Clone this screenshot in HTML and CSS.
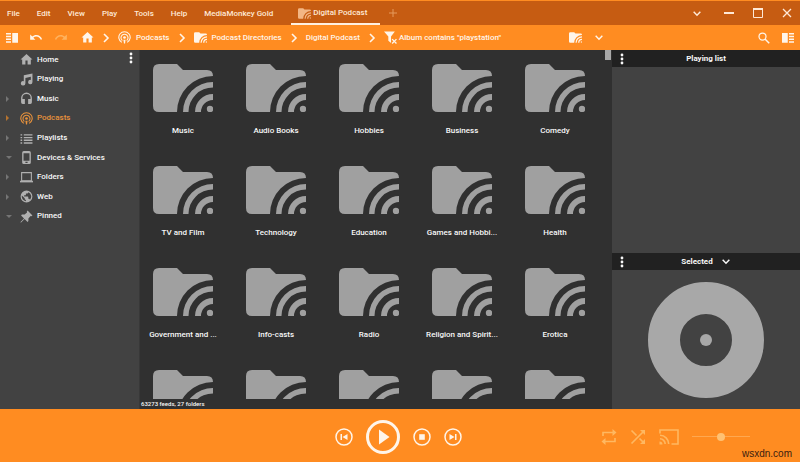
FILE: index.html
```html
<!DOCTYPE html>
<html lang="en">
<head>
    <meta charset="UTF-8">
    <meta name="viewport" content="width=device-width, initial-scale=1.0">
    <title>MediaMonkey</title>
    <link rel="stylesheet" href="styles.css">
</head>
<body>

    <!-- Shared icons -->
    <svg class="hidden" xmlns="http://www.w3.org/2000/svg">
        <symbol id="feedFolder" viewBox="0 0 60 48">
            <path d="M6 0H24L30 6H54Q60 6 60 12A36 36 0 0 0 24 48H6Q0 48 0 42V6Q0 0 6 0Z"/>
            <path d="M60 18V23.500A24.500 24.500 0 0 0 35.500 48H30A30 30 0 0 1 60 18Z"/>
            <path d="M60 30V36A12 12 0 0 0 48 48H42A18 18 0 0 1 60 30Z"/>
            <circle cx="57" cy="45" r="3.200"/>
        </symbol>
        <symbol id="home" viewBox="0 0 24 24"><path d="M10 21v-7h4v7h6v-9h3L12 2 1 12h3v9z"/></symbol>
        <symbol id="podcast" viewBox="0 0 24 24">
            <g fill="none" stroke="currentColor" stroke-width="2">
                <path d="M7 21A10.500 10.500 0 1 1 17 21"/>
                <path d="M8 17.500A6.500 6.500 0 1 1 16 17.500"/>
            </g>
            <circle cx="12" cy="12" r="2.500"/>
            <path d="M10 16h4l-1 7h-2z"/>
        </symbol>
        <symbol id="right" viewBox="0 0 8 12"><path d="M2 2l4 4-4 4" fill="none" stroke="currentColor" stroke-width="1.600"/></symbol>
        <symbol id="down" viewBox="0 0 12 8"><path d="M2 2l4 4 4-4" fill="none" stroke="currentColor" stroke-width="1.800"/></symbol>
        <symbol id="dots" viewBox="0 0 4 12"><circle cx="2" cy="2" r="1.400"/><circle cx="2" cy="6" r="1.400"/><circle cx="2" cy="10" r="1.400"/></symbol>
        <symbol id="panel" viewBox="0 0 24 20"><path d="M0 0h10v3H0zM0 5.500h10v3H0zM0 11h10v3H0zM0 16.500h10v3H0zM12.500 0H24v19.500H12.500z"/></symbol>
        <symbol id="undo" viewBox="0 0 24 12"><path d="M12.500 1C9.800 1 7.400 2 5.600 3.600L2 0v9h9L7.400 5.400C8.800 4.200 10.500 3.500 12.500 3.500c3.500 0 6.500 2.300 7.600 5.500l2.400-.8C21.100 4 17.200 1 12.500 1z"/></symbol>
    </svg>

    <!-- Title bar -->
    <header class="title-bar">
        <nav class="menu">
            <button>File</button>
            <button>Edit</button>
            <button>View</button>
            <button>Play</button>
            <button>Tools</button>
            <button>Help</button>
            <button>MediaMonkey Gold</button>
        </nav>
        <button class="tab"><svg class="icon-folder"><use href="#feedFolder"/></svg>Digital Podcast</button>
        <button class="add-tab" aria-label="New tab"><svg class="icon-small" viewBox="0 0 10 10"><path d="M5 1v8M1 5h8" stroke="currentColor"/></svg></button>
        <div class="window-buttons">
            <button class="tab-list" aria-label="Tabs"><svg class="icon-down"><use href="#down"/></svg></button>
            <button aria-label="Minimize"><svg class="icon-small" viewBox="0 0 10 10"><path d="M0 5h10" stroke="currentColor" stroke-width="2"/></svg></button>
            <button aria-label="Maximize"><svg class="icon-small" viewBox="0 0 10 10"><path d="M.5 1h9v8.500h-9z" fill="none" stroke="currentColor"/><path d="M0 1h10" stroke="currentColor" stroke-width="2"/></svg></button>
            <button aria-label="Close"><svg class="icon-small" viewBox="0 0 10 10"><path d="M1 1l8 8M9 1L1 9" stroke="currentColor" stroke-width="1.300"/></svg></button>
        </div>
    </header>

    <!-- Toolbar -->
    <div class="toolbar">
        <div class="toolbar-left">
            <button aria-label="Toggle sidebar"><svg class="icon-panel"><use href="#panel"/></svg></button>
            <button aria-label="Undo"><svg class="icon-undo"><use href="#undo"/></svg></button>
            <button class="redo" aria-label="Redo"><svg class="icon-undo flip"><use href="#undo"/></svg></button>
            <nav class="path">
                <a href="#" aria-label="Home"><svg class="icon"><use href="#home"/></svg></a>
                <svg class="icon-right"><use href="#right"/></svg>
                <a href="#"><svg class="icon"><use href="#podcast"/></svg>Podcasts</a>
                <svg class="icon-right"><use href="#right"/></svg>
                <a href="#"><svg class="icon-folder"><use href="#feedFolder"/></svg>Podcast Directories</a>
                <svg class="icon-right"><use href="#right"/></svg>
                <a href="#">Digital Podcast</a>
                <svg class="icon-right"><use href="#right"/></svg>
                <a href="#" class="filter"><svg class="icon" viewBox="0 0 24 24"><path d="M0 1h20l-7 9v12l-5-4v-8z"/><path d="M15 15l8 8M23 15l-8 8" stroke="currentColor" stroke-width="2.500"/></svg>Album contains "playstation"</a>
            </nav>
            <button class="view-button" aria-label="View"><svg class="icon-folder"><use href="#feedFolder"/></svg><svg class="icon-down"><use href="#down"/></svg></button>
        </div>
        <div class="toolbar-right">
            <button aria-label="Search"><svg class="icon-search" viewBox="0 0 24 24"><circle cx="9" cy="9" r="7" fill="none" stroke="currentColor" stroke-width="2.500"/><path d="M14 14l8.500 8.500" stroke="currentColor" stroke-width="3"/></svg></button>
            <button aria-label="Toggle playing list"><svg class="icon-panel flip"><use href="#panel"/></svg></button>
        </div>
    </div>

    <div class="content">

        <!-- Media tree -->
        <aside class="sidebar">
            <ul class="tree">
                <li><a href="#"><span class="arrow"></span><svg class="icon"><use href="#home"/></svg>Home</a></li>
                <li><a href="#"><span class="arrow"></span><svg class="icon" viewBox="0 0 24 24"><path d="M23 1v15.500a4 4 0 1 1-3-3.800V7L10 9v10a4.200 4.200 0 1 1-3-4V4z"/></svg>Playing</a></li>
                <li><a href="#"><span class="arrow closed"></span><svg class="icon" viewBox="0 0 24 24"><path d="M12 1A10 10 0 0 0 2 11v8a3 3 0 0 0 3 3h4v-9H4.500v-2a7.500 7.500 0 0 1 15 0v2H15v9h4a3 3 0 0 0 3-3v-8A10 10 0 0 0 12 1z"/></svg>Music</a></li>
                <li><a href="#" class="active"><span class="arrow closed"></span><svg class="icon"><use href="#podcast"/></svg>Podcasts</a></li>
                <li><a href="#"><span class="arrow closed"></span><svg class="icon" viewBox="0 0 24 24"><path d="M1 4h3v2.500H1zM7 4h16v2.500H7zM1 9h3v2.500H1zM7 9h16v2.500H7zM1 14h3v2.500H1zM7 14h16v2.500H7zM1 19h3v2.500H1zM7 19h16v2.500H7z"/></svg>Playlists</a></li>
                <li><a href="#"><span class="arrow open"></span><svg class="icon" viewBox="0 0 24 24"><path d="M7 0h10a3 3 0 0 1 3 3v18a3 3 0 0 1-3 3H7a3 3 0 0 1-3-3V3a3 3 0 0 1 3-3zM6.500 4v14h11V4zM10 20v2h4v-2z" fill-rule="evenodd"/></svg>Devices &amp; Services</a></li>
                <li><a href="#"><span class="arrow closed"></span><svg class="icon" viewBox="0 0 24 24"><path d="M3 3h18v15H3z" fill="none" stroke="currentColor" stroke-width="2"/><path d="M0 18h24v3H0z"/></svg>Folders</a></li>
                <li><a href="#"><span class="arrow closed"></span><svg class="icon" viewBox="1 1 22 22"><path d="M12 2a10 10 0 1 0 0 20 10 10 0 0 0 0-20zm-1 17.900A8 8 0 0 1 4.200 10.200L9 15v1c0 1.100.9 2 2 2zm6.900-2.500A2 2 0 0 0 16 16h-1v-3c0-.600-.400-1-1-1H8v-2h2c.600 0 1-.400 1-1V7h2a2 2 0 0 0 2-2v-.400a8 8 0 0 1 2.900 12.800z"/></svg>Web</a></li>
                <li><a href="#"><span class="arrow open"></span><svg class="icon" viewBox="0 0 24 24"><path d="M14 1l9 9-2 1.500-1.500-.5-4 4.500v5L14 22l-5.500-5.500L2 23H1v-1l6.500-6.500L2 10l1.500-1.500h5L13 4.500 12.500 3z"/></svg>Pinned</a></li>
            </ul>
            <button class="more" aria-label="Options"><svg class="icon-dots"><use href="#dots"/></svg></button>
        </aside>

        <!-- Directory -->
        <main class="main">
            <div class="folders">
                <div class="folder"><svg><use href="#feedFolder"/></svg><p>Music</p></div>
                <div class="folder"><svg><use href="#feedFolder"/></svg><p>Audio Books</p></div>
                <div class="folder"><svg><use href="#feedFolder"/></svg><p>Hobbies</p></div>
                <div class="folder"><svg><use href="#feedFolder"/></svg><p>Business</p></div>
                <div class="folder"><svg><use href="#feedFolder"/></svg><p>Comedy</p></div>
                <div class="folder"><svg><use href="#feedFolder"/></svg><p>TV and Film</p></div>
                <div class="folder"><svg><use href="#feedFolder"/></svg><p>Technology</p></div>
                <div class="folder"><svg><use href="#feedFolder"/></svg><p>Education</p></div>
                <div class="folder"><svg><use href="#feedFolder"/></svg><p>Games and Hobbi...</p></div>
                <div class="folder"><svg><use href="#feedFolder"/></svg><p>Health</p></div>
                <div class="folder"><svg><use href="#feedFolder"/></svg><p>Government and ...</p></div>
                <div class="folder"><svg><use href="#feedFolder"/></svg><p>Info-casts</p></div>
                <div class="folder"><svg><use href="#feedFolder"/></svg><p>Radio</p></div>
                <div class="folder"><svg><use href="#feedFolder"/></svg><p>Religion and Spirit...</p></div>
                <div class="folder"><svg><use href="#feedFolder"/></svg><p>Erotica</p></div>
                <div class="folder"><svg><use href="#feedFolder"/></svg></div>
                <div class="folder"><svg><use href="#feedFolder"/></svg></div>
                <div class="folder"><svg><use href="#feedFolder"/></svg></div>
                <div class="folder"><svg><use href="#feedFolder"/></svg></div>
                <div class="folder"><svg><use href="#feedFolder"/></svg></div>
            </div>
            <div class="scroll-thumb"></div>
            <div class="status">63273 feeds, 27 folders</div>
        </main>

        <!-- Right column -->
        <aside class="right-column">
            <div class="panel-header">
                <button aria-label="Playing list options"><svg class="icon-dots"><use href="#dots"/></svg></button>
                <h2>Playing list</h2>
            </div>
            <div class="playing-list"></div>
            <div class="panel-header">
                <button aria-label="Selected options"><svg class="icon-dots"><use href="#dots"/></svg></button>
                <h2>Selected <svg class="icon-down"><use href="#down"/></svg></h2>
            </div>
            <div class="artwork">
                <svg viewBox="0 0 116 116"><circle cx="58" cy="58" r="42" fill="none" stroke="currentColor" stroke-width="32"/><circle cx="58" cy="58" r="6"/></svg>
            </div>
        </aside>
    </div>

    <!-- Player -->
    <footer class="player">
        <div class="controls">
            <button aria-label="Previous"><svg class="control" viewBox="0 0 18 18"><circle cx="9" cy="9" r="8" fill="none" stroke="currentColor" stroke-width="1.500"/><path d="M5.500 6H7v6H5.500zM12.500 6v6L7.500 9z"/></svg></button>
            <button aria-label="Play"><svg class="control-play" viewBox="0 0 34 34"><circle cx="17" cy="17" r="15.500" fill="none" stroke="currentColor" stroke-width="3"/><path d="M13 9.500v15L23.500 17z"/></svg></button>
            <button aria-label="Stop"><svg class="control" viewBox="0 0 18 18"><circle cx="9" cy="9" r="8" fill="none" stroke="currentColor" stroke-width="1.500"/><path d="M6.200 6.200h5.600v5.600H6.200z"/></svg></button>
            <button aria-label="Next"><svg class="control" viewBox="0 0 18 18"><circle cx="9" cy="9" r="8" fill="none" stroke="currentColor" stroke-width="1.500"/><path d="M11 6h1.500v6H11zM5.500 6v6l5-3z"/></svg></button>
        </div>
        <div class="options">
            <button aria-label="Repeat"><svg class="option" viewBox="0 0 16 16"><path d="M2 7V3.500h10M14 9v3.500H4" fill="none" stroke="currentColor" stroke-width="1.600"/><path d="M11.500 0v7L15.500 3.500zM4.500 9v7L.5 12.500z"/></svg></button>
            <button aria-label="Shuffle"><svg class="option" viewBox="0 0 16 16"><path d="M1.500 1.500l5 5M1.500 14.500L13 3M9.500 9.500L13 13" fill="none" stroke="currentColor" stroke-width="1.700"/><path d="M10 1h5v5zM15 10v5h-5z"/></svg></button>
            <button aria-label="Cast"><svg class="cast" viewBox="0 0 20 16"><g fill="none" stroke="currentColor" stroke-width="1.600"><path d="M1 4.500V1h18v14h-6.500M1 6.300A8.700 8.700 0 0 1 9.700 15M1 9.800A5.200 5.200 0 0 1 6.200 15"/></g><path d="M.5 12.500A3 3 0 0 1 3.500 15.500h-3z"/></svg></button>
            <input type="range" class="volume" min="0" max="100" value="50" aria-label="Volume">
        </div>
        <span class="site">wsxdn.com</span>
    </footer>

</body>
</html>
```
FILE: styles.css
```css
* {
    box-sizing: border-box;
}
body {
    font-family: Roboto, "Liberation Sans", sans-serif;
    font-size: 8px;
    font-weight: 500;
    line-height: 12px;
    color: #f8f8f8;
    background-color: #303030;
    display: flex;
    flex-direction: column;
    height: 100vh;
    margin: 0;
    overflow: hidden;
}
button {
    display: flex;
    align-items: center;
    background: none;
    border: none;
    padding: 0;
    color: inherit;
    font: inherit;
    cursor: pointer;
}
a {
    display: flex;
    align-items: center;
    gap: 5px;
    color: inherit;
    text-decoration: none;
    white-space: nowrap;
}
svg {
    display: block;
    flex: none;
    fill: currentColor;
}
.hidden {
    display: none;
}

/* Icon sizes */
.icon {
    width: 13px;
    height: 13px;
}
.icon-folder {
    width: 13px;
    height: 11px;
}
.icon-panel {
    width: 12px;
    height: 10px;
}
.icon-search {
    width: 12px;
    height: 12px;
}
.icon-undo {
    width: 14px;
    height: 8px;
}
.icon-right {
    width: 8px;
    height: 12px;
}
.icon-down {
    width: 10px;
    height: 7px;
}
.icon-dots {
    width: 4px;
    height: 12px;
}
.icon-small {
    width: 10px;
    height: 10px;
}
.flip {
    transform: scaleX(-1);
}

/* Title bar */
.title-bar {
    display: flex;
    flex: none;
    height: 25px;
    border-top: 1px solid #ff8c21;
    background: #c65c12;
    color: #ffe9d6;
    padding-left: 7px;
}
.menu {
    display: flex;
    gap: 17px;
    margin-right: 18px;
    padding-top: 2px;
}
.tab {
    gap: 2px;
    padding: 2px 13px 0 7px;
    border-bottom: 2px solid #fff0e0;
}
.tab .icon-folder {
    color: #f3b684;
}
.add-tab {
    margin-left: 8px;
    color: #e59a5c;
}
.window-buttons {
    display: flex;
    gap: 19px;
    margin-left: auto;
    padding-right: 8px;
}
.tab-list {
    margin-right: 3px;
}

/* Toolbar */
.toolbar {
    display: flex;
    flex: none;
    height: 25px;
    background: #ff8c21;
    color: #fff5ea;
}
.toolbar-left {
    display: flex;
    flex: 1;
    align-items: center;
    gap: 11px;
    padding: 0 8px 0 6px;
}
.redo {
    color: #ffb25e;
}
.path {
    display: flex;
    align-items: center;
    gap: 8px;
    margin-left: 2px;
}
.path .filter {
    gap: 2px;
}
.view-button {
    gap: 12px;
    margin-left: auto;
}
.toolbar-right {
    display: flex;
    justify-content: flex-end;
    align-items: center;
    gap: 12px;
    width: 188px;
    padding-right: 6px;
}

/* Content */
.content {
    display: flex;
    flex: 1;
    min-height: 0;
}
.sidebar {
    display: flex;
    justify-content: space-between;
    align-items: flex-start;
    width: 140px;
    background: #424242;
    border-right: 1px solid #383838;
}
.tree {
    display: flex;
    flex-direction: column;
    height: 176px;
    margin: 0;
    padding: 0 0 0 6px;
    list-style: none;
}
.tree li {
    display: flex;
    flex: 1;
}
.tree a {
    gap: 4px;
}
.tree .icon {
    color: #b0b0b0;
}
.tree .active,
.tree .active .icon {
    color: #e8923c;
}
.arrow {
    width: 10px;
    color: #757575;
}
.active .arrow {
    color: #b5732f;
}
.arrow::before {
    content: "";
    display: block;
    width: 0;
    height: 0;
    border: 3px solid transparent;
}
.closed::before {
    border-left-color: currentColor;
    border-right-width: 0;
}
.open::before {
    border-top-color: currentColor;
    border-bottom-width: 0;
}
.more {
    padding: 2px 6px;
}
.main {
    display: flex;
    flex: 1;
    flex-direction: column;
    min-width: 0;
    position: relative;
    background: #303030;
}
.folders {
    display: grid;
    flex: 1;
    grid-template-columns: repeat(auto-fill, 72px);
    grid-auto-rows: 102px;
    column-gap: 21px;
    min-height: 0;
    overflow: hidden;
    padding: 14px 0 0 7px;
}
.folder {
    display: flex;
    flex-direction: column;
    align-items: center;
    gap: 13px;
    color: #a0a0a0;
}
.folder svg {
    width: 60px;
    height: 48px;
}
.folder p {
    margin: 0;
    color: #f8f8f8;
    white-space: nowrap;
}
.scroll-thumb {
    position: absolute;
    top: 0;
    right: 1px;
    width: 6px;
    height: 10px;
    background: #a8a8a8;
}
.status {
    height: 10px;
    padding-left: 1px;
    font-size: 6px;
    line-height: 10px;
}
.right-column {
    display: flex;
    flex-direction: column;
    width: 188px;
    background: #424242;
}
.panel-header {
    display: flex;
    align-items: center;
    height: 17px;
    padding: 0 12px 0 8px;
    background: #212121;
}
.panel-header h2 {
    display: flex;
    flex: 1;
    justify-content: center;
    align-items: center;
    gap: 8px;
    margin: 0;
    font-size: 8px;
    font-weight: 700;
}
.playing-list {
    flex: 1;
}
.artwork {
    display: flex;
    justify-content: center;
    padding: 12px 12px 11px;
    color: #a8a8a8;
}
.artwork svg {
    width: 116px;
    height: 116px;
}

/* Player */
.player {
    display: grid;
    flex: none;
    grid-template-columns: 1fr auto 1fr;
    align-items: center;
    height: 53px;
    padding-top: 2px;
    position: relative;
    background: #ff8c21;
    color: #fff5ea;
}
.controls {
    display: flex;
    grid-column: 2;
    align-items: center;
    gap: 13px;
    padding-right: 4px;
}
.control {
    width: 18px;
    height: 18px;
}
.control-play {
    width: 34px;
    height: 34px;
}
.options {
    display: flex;
    justify-content: flex-end;
    align-items: center;
    gap: 13px;
    padding-right: 50px;
    color: #ffb861;
}
.option {
    width: 16px;
    height: 16px;
}
.cast {
    width: 20px;
    height: 16px;
}
.volume {
    appearance: none;
    width: 58px;
    height: 8px;
    margin: 0;
    background: linear-gradient(#ffa850, #ffa850) center / 100% 1px no-repeat;
}
.volume::-webkit-slider-thumb {
    appearance: none;
    width: 8px;
    height: 8px;
    border-radius: 50%;
    background: #ffc172;
}
.site {
    position: absolute;
    right: 8px;
    bottom: 2px;
    font-family: "Liberation Sans", sans-serif;
    font-size: 10px;
    font-weight: 400;
    color: #3a2010;
}
```
